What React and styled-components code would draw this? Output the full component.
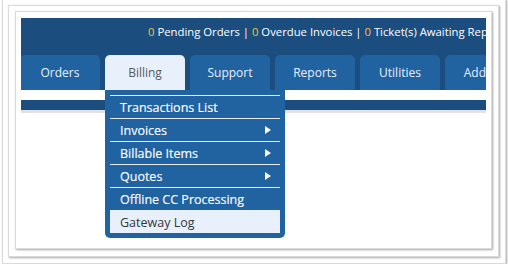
import React from 'react';
import styled, { createGlobalStyle } from 'styled-components';

const GlobalStyle = createGlobalStyle`
  html, body {
    margin: 0;
    padding: 0;
    background: #ffffff;
    overflow: hidden;
  }
  body {
    font-family: "Open Sans", "Liberation Sans", sans-serif;
  }
`;

const Sheet = styled.div`
  box-sizing: border-box;
  background: #ffffff;
  border: 1px solid #dadada;
  box-shadow: 1px 1px 2px rgba(0, 0, 0, 0.35);
  width: ${(p) => p.w}px;
  height: ${(p) => p.h}px;
  padding: ${(p) => p.pad};
`;

const Outer = styled(Sheet)`
  margin: -1px 0 0 2px;
`;

const Viewport = styled.div`
  position: relative;
  width: 465px;
  height: 225px;
  overflow: hidden;
`;

const Header = styled.div`
  background: #1b4e7f;
  height: 72px;
  display: flex;
  flex-direction: column;
  justify-content: space-between;
`;

const Stats = styled.div`
  padding: 6px 0 0 127px;
  white-space: nowrap;
  color: #ffffff;
  font-size: 11.3px;
  line-height: 16px;
`;

const Num = styled.span`
  color: #f5c13a;
`;

const Tabs = styled.div`
  display: flex;
  gap: 5px;
  margin-left: -1px;
`;

const Tab = styled.div`
  flex: none;
  width: 80px;
  height: 35px;
  border-radius: 5px 5px 0 0;
  display: flex;
  align-items: center;
  justify-content: center;
  font-size: 12px;
  white-space: nowrap;
  background: ${(p) => (p.active ? '#e8f0fb' : '#2162a1')};
  color: ${(p) => (p.active ? '#555a60' : '#eaf1f8')};
`;

const Gap = styled.div`
  height: 10px;
  background: #ffffff;
`;

const SubBar = styled.div`
  height: 10px;
  background: #1b4e7f;
  border-bottom: 3px solid #dfe3e7;
`;

const Dropdown = styled.div`
  position: absolute;
  top: 72px;
  left: 84px;
  width: 180px;
  box-sizing: border-box;
  padding: 5px 5px 5px;
  background: #2162a1;
  border-radius: 0 0 5px 5px;
`;

const Item = styled.div`
  height: 22px;
  border-top: 1px solid ${(p) => (p.active ? '#e8f0fb' : '#e6edf5')};
  display: flex;
  align-items: center;
  justify-content: space-between;
  padding: 0 9px 0 10px;
  font-size: 12.5px;
  white-space: nowrap;
  background: ${(p) => (p.active ? '#e8f0fb' : 'transparent')};
  color: ${(p) => (p.active ? '#33373b' : '#ffffff')};
  -webkit-text-stroke: ${(p) => (p.active ? '0' : '0.15px #ffffff')};
`;

const Arrow = () => (
  <svg width="6" height="8" viewBox="0 0 6 8">
    <path d="M0 0 L6 4 L0 8 Z" fill="#ffffff" />
  </svg>
);

const tabs = ['Orders', 'Billing', 'Support', 'Reports', 'Utilities', 'Addons'];

const menu = [
  { label: 'Transactions List' },
  { label: 'Invoices', sub: true },
  { label: 'Billable Items', sub: true },
  { label: 'Quotes', sub: true },
  { label: 'Offline CC Processing' },
  { label: 'Gateway Log', active: true },
];

export default function App() {
  return (
    <>
      <GlobalStyle />
      <Outer w={504} h={265} pad="5px 0 0 5px">
        <Sheet w={491} h={252} pad="5px 0 0 6px">
          <Sheet w={477} h={238} pad="6px 0 0 5px">
            <Viewport>
              <Header>
                <Stats>
                  <Num>0</Num> Pending Orders | <Num>0</Num> Overdue Invoices |{' '}
                  <Num>0</Num> Ticket(s) Awaiting Reply
                </Stats>
                <Tabs>
                  {tabs.map((t) => (
                    <Tab key={t} active={t === 'Billing'}>
                      {t}
                    </Tab>
                  ))}
                </Tabs>
              </Header>
              <Gap />
              <SubBar />
              <Dropdown>
                {menu.map((m) => (
                  <Item key={m.label} active={m.active}>
                    <span>{m.label}</span>
                    {m.sub && <Arrow />}
                  </Item>
                ))}
              </Dropdown>
            </Viewport>
          </Sheet>
        </Sheet>
      </Outer>
    </>
  );
}
